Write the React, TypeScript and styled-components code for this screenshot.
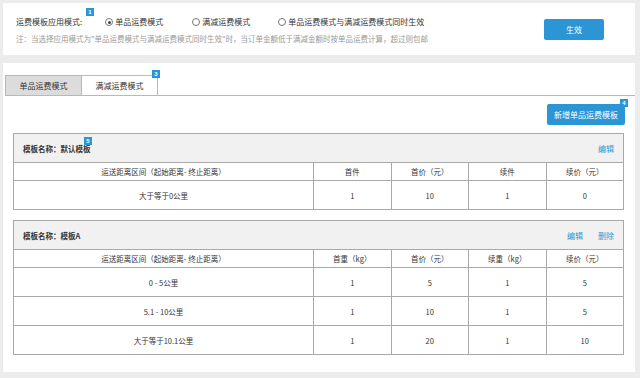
import React from 'react';
import styled, { createGlobalStyle } from 'styled-components';

const GlobalStyle = createGlobalStyle`
  body {
    margin: 0;
    background: #ececec;
    font-family: "Noto Sans CJK SC", "Liberation Sans", sans-serif;
    color: #333;
  }
`;

const Page = styled.div`
  width: 640px;
  height: 378px;
  padding: 3px 5px 0 3px;
  box-sizing: border-box;
  overflow: hidden;
`;

const Panel = styled.div<{ $top?: number }>`
  background: #fff;
  margin-top: ${(p) => p.$top || 0}px;
`;

const ModeBar = styled(Panel)`
  height: 52px;
  display: flex;
  align-items: center;
  padding: 0 31px 0 13px;
  box-sizing: border-box;
`;

const ModeInfo = styled.div`
  flex: 1;
  display: flex;
  flex-direction: column;
  gap: 7px;
  padding-top: 3px;
`;

const ModeRow = styled.div`
  display: flex;
  align-items: center;
  font-size: 8px;
  line-height: 10px;
`;

const Label = styled.span`
  position: relative;
  margin-right: 23px;
`;

const Badge = styled.span<{ $x: number; $y: number }>`
  position: absolute;
  left: ${(p) => p.$x}px;
  top: ${(p) => p.$y}px;
  width: 8px;
  height: 8px;
  background: #2b95d6;
  color: #fff;
  font-family: "Liberation Sans", sans-serif;
  font-size: 6px;
  line-height: 8px;
  text-align: center;
  font-weight: bold;
`;

const Radio = styled.label<{ $w?: number }>`
  display: flex;
  align-items: center;
  gap: 2px;
  width: ${(p) => (p.$w ? p.$w + 'px' : 'auto')};
`;

const Dot = styled.span<{ $on?: boolean }>`
  width: 6px;
  height: 6px;
  border-radius: 50%;
  border: 1px solid #777;
  display: inline-flex;
  align-items: center;
  justify-content: center;
  &::after {
    content: '';
    width: 3px;
    height: 3px;
    border-radius: 50%;
    background: ${(p) => (p.$on ? '#444' : 'transparent')};
  }
`;

const Note = styled.div`
  font-size: 7.5px;
  color: #9a9a9a;
  line-height: 10px;
`;

const Button = styled.button<{ $w: number }>`
  position: relative;
  width: ${(p) => p.$w}px;
  height: 21px;
  border: none;
  border-radius: 2px;
  background: #2b95d6;
  color: #fff;
  font-family: inherit;
  font-size: 8px;
  padding: 0;
`;

const MainPanel = styled(Panel)`
  padding: 12px 11px 20px 10px;
  height: 309px;
  box-sizing: border-box;
`;

const TabBar = styled.div`
  display: flex;
  border-bottom: 1px solid #b8b8b8;
  margin: 0 -11px 0 -8px;
`;

const Tab = styled.div<{ $active?: boolean }>`
  position: relative;
  width: 75px;
  height: 19px;
  border: 1px solid #b8b8b8;
  border-bottom: none;
  margin-left: -1px;
  background: ${(p) => (p.$active ? '#fff' : '#dcdcdc')};
  font-size: 8px;
  display: flex;
  align-items: center;
  justify-content: center;
  &:first-child {
    margin-left: 0;
  }
`;

const Toolbar = styled.div`
  display: flex;
  justify-content: flex-end;
  margin: 8px -1px 8px 0;
`;

const Table = styled.table<{ $gap?: number }>`
  width: 100%;
  border-collapse: collapse;
  margin-top: ${(p) => p.$gap || 0}px;
  font-size: 7.5px;
  table-layout: fixed;
  td,
  th {
    border: 1px solid #a9a9a9;
    text-align: center;
    padding: 0;
  }
  th {
    font-weight: normal;
    height: 17px;
  }
  td {
    height: 28px;
  }
`;

const TitleCell = styled.th`
  && {
    height: 28px;
    background: #f1f1f1;
    text-align: left;
    padding: 0 9px;
  }
`;

const TitleBar = styled.div`
  display: flex;
  align-items: center;
  justify-content: space-between;
  font-weight: bold;
  font-size: 7.5px;
`;

const Name = styled.span`
  position: relative;
`;

const Actions = styled.span`
  display: flex;
  gap: 15px;
  font-weight: normal;
`;

const Link = styled.a`
  color: #2a9bd3;
  font-size: 8px;
`;

type Tpl = {
  name: string;
  badge?: string;
  actions: string[];
  cols: string[];
  rows: string[][];
};

const templates: Tpl[] = [
  {
    name: '模板名称：默认模板',
    badge: '5',
    actions: ['编辑'],
    cols: ['运送距离区间（起始距离- 终止距离）', '首件', '首价（元）', '续件', '续价（元）'],
    rows: [['大于等于0公里', '1', '10', '1', '0']],
  },
  {
    name: '模板名称：模板A',
    actions: ['编辑', '删除'],
    cols: ['运送距离区间（起始距离- 终止距离）', '首重（kg）', '首价（元）', '续重（kg）', '续价（元）'],
    rows: [
      ['0 - 5公里', '1', '5', '1', '5'],
      ['5.1 - 10公里', '1', '10', '1', '5'],
      ['大于等于10.1公里', '1', '20', '1', '10'],
    ],
  },
];

const TemplateTable: React.FC<{ tpl: Tpl; gap: number }> = ({ tpl, gap }) => (
  <Table $gap={gap}>
    <colgroup>
      <col style={{ width: 300 }} />
      <col />
      <col />
      <col />
      <col />
    </colgroup>
    <thead>
      <tr>
        <TitleCell colSpan={5}>
          <TitleBar>
            <Name>
              {tpl.name}
              {tpl.badge && <Badge $x={61} $y={-6}>{tpl.badge}</Badge>}
            </Name>
            <Actions>
              {tpl.actions.map((a) => (
                <Link key={a}>{a}</Link>
              ))}
            </Actions>
          </TitleBar>
        </TitleCell>
      </tr>
      <tr>
        {tpl.cols.map((c) => (
          <th key={c}>{c}</th>
        ))}
      </tr>
    </thead>
    <tbody>
      {tpl.rows.map((r, i) => (
        <tr key={i}>
          {r.map((v, j) => (
            <td key={j}>{v}</td>
          ))}
        </tr>
      ))}
    </tbody>
  </Table>
);

export default function App() {
  return (
    <Page>
      <GlobalStyle />
      <ModeBar>
        <ModeInfo>
          <ModeRow>
            <Label>
              运费模板应用模式:
              <Badge $x={70} $y={-9}>1</Badge>
            </Label>
            <Radio $w={87}>
              <Dot $on />
              单品运费模式
            </Radio>
            <Radio $w={86}>
              <Dot />
              满减运费模式
            </Radio>
            <Radio>
              <Dot />
              单品运费模式与满减运费模式同时生效
            </Radio>
          </ModeRow>
          <Note>
            注：当选择应用模式为"单品运费模式与满减运费模式同时生效"时，当订单金额低于满减金额时按单品运费计算，超过则包邮
          </Note>
        </ModeInfo>
        <Button $w={60}>生效</Button>
      </ModeBar>

      <MainPanel $top={8}>
        <TabBar>
          <Tab>单品运费模式</Tab>
          <Tab $active>
            满减运费模式
            <Badge $x={70} $y={-6}>3</Badge>
          </Tab>
        </TabBar>
        <Toolbar>
          <Button $w={78}>
            新增单品运费模板
            <Badge $x={73} $y={-5}>4</Badge>
          </Button>
        </Toolbar>
        {templates.map((t, i) => (
          <TemplateTable key={t.name} tpl={t} gap={i ? 10 : 0} />
        ))}
      </MainPanel>
    </Page>
  );
}
